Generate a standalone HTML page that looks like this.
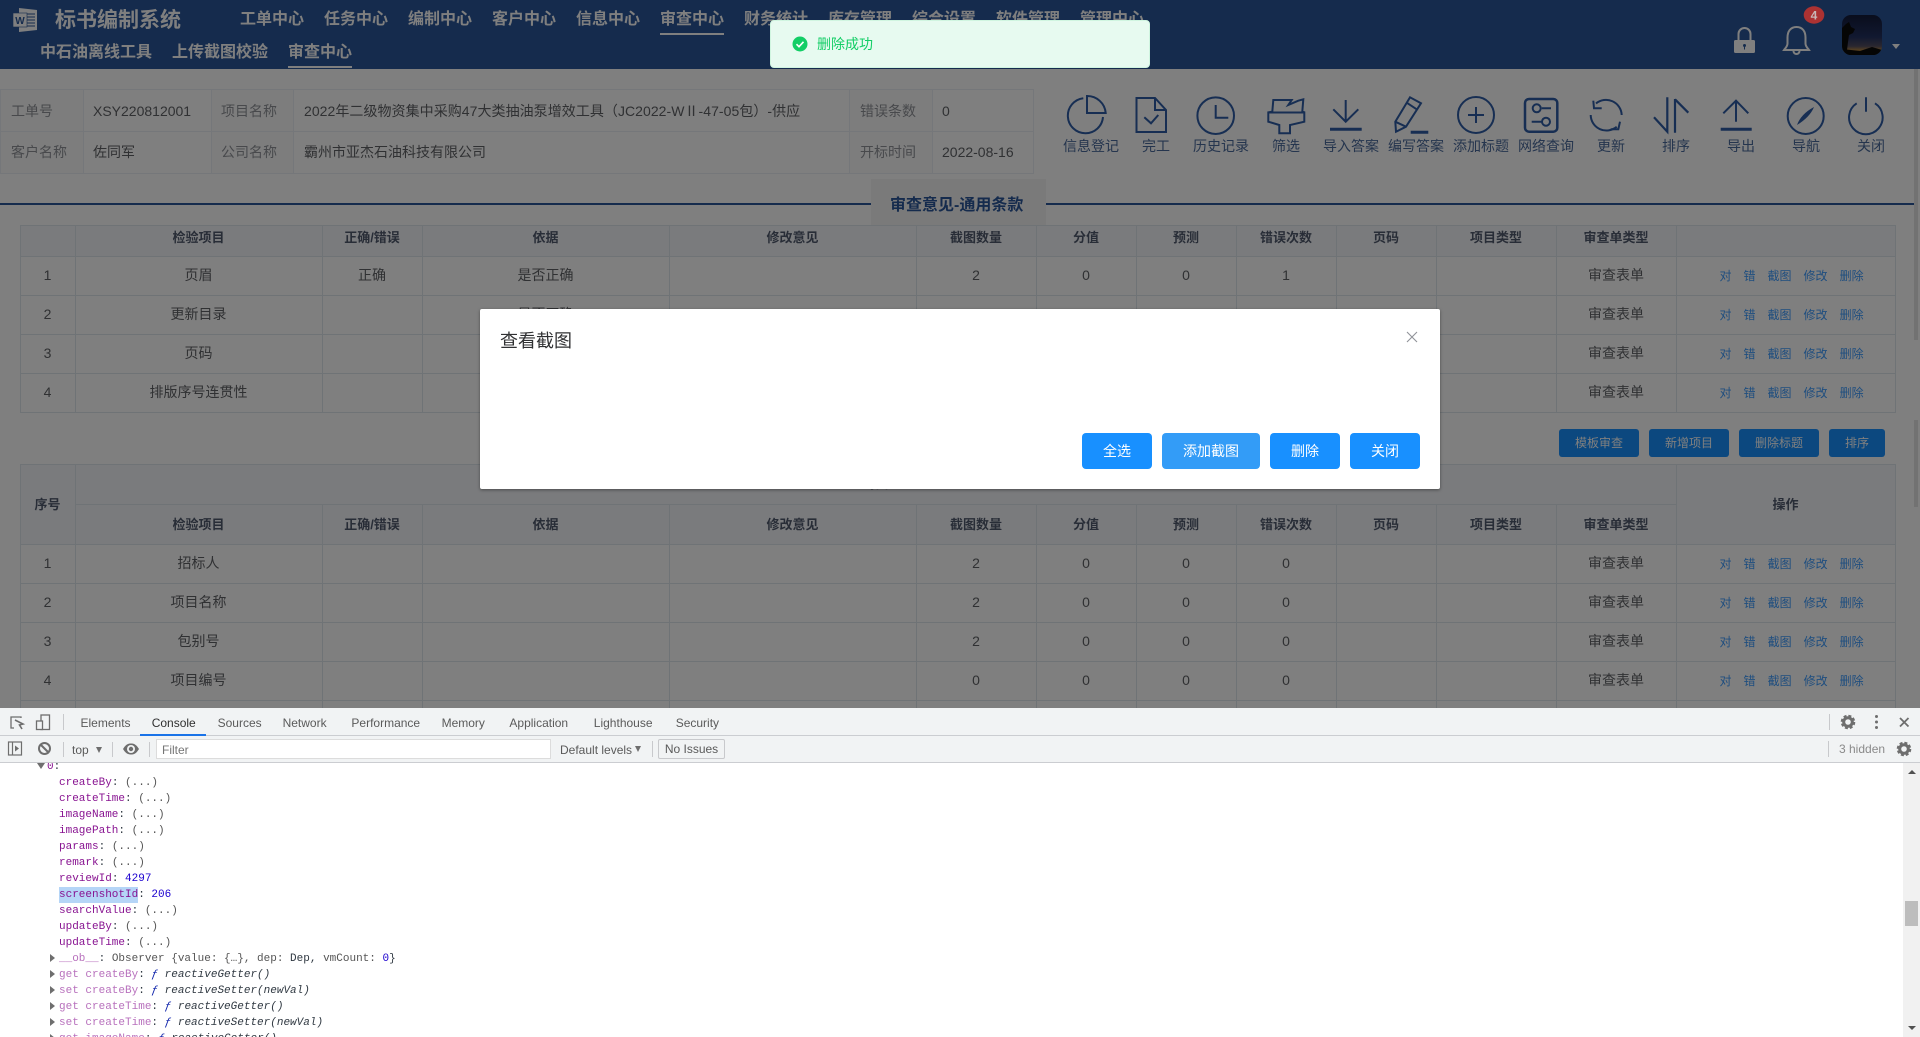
<!DOCTYPE html>
<html lang="zh">
<head>
<meta charset="utf-8">
<title>标书编制系统</title>
<style>
*{box-sizing:border-box}
html,body{margin:0;padding:0;width:1920px;height:1037px;overflow:hidden;background:#fff;font-family:"Liberation Sans","Noto Sans CJK SC",sans-serif}
.a{position:absolute;white-space:nowrap}
#main{position:absolute;left:0;top:0;width:1920px;height:708px;overflow:hidden;background:#fff}
#hd{position:absolute;left:0;top:0;width:1920px;height:69px;background:#2b579a;color:#fff}
#hd .n{position:absolute;top:8px;font-size:16px;line-height:24px;font-weight:700;white-space:nowrap}
#hd .s{position:absolute;top:41px;font-size:16px;line-height:24px;font-weight:700;white-space:nowrap}
#hd .u{position:absolute;height:2px;background:#fff}
table.i{position:absolute;left:0;top:89px;width:1033px;border-collapse:collapse;table-layout:fixed;font-size:14px;color:#606266}
table.i td{height:42px;border:1px solid #ebeef5;padding:0 9px;white-space:nowrap;overflow:hidden}
table.i tr+tr td{padding-bottom:1px}
table.i td.l{color:#909399;background:#fafafa;padding-left:10px}
.t{position:absolute;left:19.5px;width:1875px;border-collapse:collapse;table-layout:fixed;font-size:14px;color:#606266}
.t td,.t th{border:1px solid #dfe6ec;text-align:center;padding:0 0 2px 0;font-weight:400;white-space:nowrap;overflow:hidden}
.t th{background:#f5f7fa;color:#515a6e;font-size:13px;font-weight:700}
.t tr.r td{height:39px}
.t td.o{text-align:left;padding-left:43px;font-size:12px;color:#3f9cff}
.t td.o span{margin-right:12px}
.lb{position:absolute;top:136px;width:65px;text-align:center;font-size:14px;line-height:20px;color:#4a6a9c;white-space:nowrap}
.b2{position:absolute;top:429px;height:28px;background:#1890ff;border-radius:3px;color:#fff;font-size:12px;line-height:28px;text-align:center}
#ov{position:absolute;left:0;top:0;width:1920px;height:708px;background:rgba(0,0,0,.5)}
#dlg{position:absolute;left:480px;top:309px;width:960px;height:180px;background:#fff;border-radius:2px;box-shadow:0 1px 3px rgba(0,0,0,.4)}
.bt{position:absolute;top:124px;height:36px;border-radius:4px;background:#1890ff;color:#fff;font-size:14px;line-height:36px;text-align:center}
#toast{position:absolute;left:770px;top:20px;width:380px;height:48px;background:#e7faf0;border:1px solid #d0f5e0;border-radius:4px}
#dt{position:absolute;left:0;top:708px;width:1920px;height:329px;background:#fff;color:#5a5a5a;font-size:12px}
#dt .tb1{position:absolute;left:0;top:0;width:1920px;height:28px;background:#f1f3f4;border-bottom:1px solid #cbcdd1}
#dt .tb2{position:absolute;left:0;top:28px;width:1920px;height:27px;background:#f1f3f4;border-bottom:1px solid #cbcdd1}
#dt .tab{position:absolute;top:7px;line-height:16px;white-space:nowrap}
#dt .sep{position:absolute;width:1px;background:#c8c9cc}
#con{position:absolute;left:0;top:55px;width:1903px;height:274px;overflow:hidden;font-family:"Liberation Mono",monospace;font-size:11px;line-height:16px;color:#303942}
#con .l{position:absolute;left:59px;white-space:pre;transform:translateY(1px)}
#con .tr{position:absolute;width:0;height:0}
.k{color:#881391}.d{color:#b871bd}.v{color:#555}.m{color:#1c00cf}.f{font-style:italic}.fb{color:#0d22aa;font-style:italic}
</style>
</head>
<body>
<div id="main">
  <div id="hd">
    <svg class="a" style="left:12px;top:7px" width="26" height="26" viewBox="0 0 26 26">
      <path d="M7 1 L25 3 V23 L7 25 Z" fill="#fff"/>
      <path d="M12 7h11M12 10h11M12 13h11M12 16h11M12 19h11" stroke="#2b579a" stroke-width="1.1"/>
      <rect x="1" y="6" width="14" height="14" fill="#fff" stroke="#2b579a" stroke-width=".6"/>
      <text x="8" y="17" font-family="Liberation Sans" font-size="10" font-weight="700" text-anchor="middle" fill="#2b579a">W</text>
    </svg>
    <div class="a" style="left:55px;top:5px;font-size:21px;line-height:32px;font-weight:700">标书编制系统</div>
    <div class="n" style="left:240px">工单中心</div>
    <div class="n" style="left:324px">任务中心</div>
    <div class="n" style="left:408px">编制中心</div>
    <div class="n" style="left:492px">客户中心</div>
    <div class="n" style="left:576px">信息中心</div>
    <div class="n" style="left:660px">审查中心</div>
    <div class="u" style="left:660px;top:33px;width:64px"></div>
    <div class="n" style="left:744px">财务统计</div>
    <div class="n" style="left:828px">库存管理</div>
    <div class="n" style="left:912px">综合设置</div>
    <div class="n" style="left:996px">软件管理</div>
    <div class="n" style="left:1080px">管理中心</div>
    <div class="s" style="left:40px">中石油离线工具</div>
    <div class="s" style="left:172px">上传截图校验</div>
    <div class="s" style="left:288px">审查中心</div>
    <div class="u" style="left:288px;top:66px;width:64px"></div>
    <svg class="a" style="left:1730px;top:22px" width="85" height="36" viewBox="1730 22 85 36">
      <path d="M1738.500 41V34a6 6 0 0 1 12 0v7" fill="none" stroke="#fff" stroke-width="2"/>
      <rect x="1734" y="40" width="21" height="13" rx="1.500" fill="#fff"/>
      <circle cx="1744.500" cy="45.500" r="1.500" fill="#2b579a"/><rect x="1744" y="46" width="1" height="3.500" fill="#2b579a"/>
      <path d="M1796.500 27c-6.500 0-9 5-9 10.500v6c0 3-2.500 5-3.500 6.500h25c-1-1.500-3.500-3.500-3.500-6.500v-6c0-5.500-2.500-10.500-9-10.500z" fill="none" stroke="#fff" stroke-width="2"/>
      <path d="M1793.500 51a3 3 0 0 0 6 0" fill="none" stroke="#fff" stroke-width="2"/>
    </svg>
    <div class="a" style="left:1892px;top:44px;width:0;height:0;border-left:4px solid transparent;border-right:4px solid transparent;border-top:5px solid #fff"></div>
  </div>

  <table class="i">
    <colgroup><col style="width:83px"><col style="width:128px"><col style="width:82px"><col style="width:556px"><col style="width:83px"><col style="width:101px"></colgroup>
    <tr><td class="l">工单号</td><td>XSY220812001</td><td class="l" style="padding-left:9px">项目名称</td><td style="padding-left:10px;letter-spacing:.05px">2022年二级物资集中采购47大类抽油泵增效工具（JC2022-WⅡ-47-05包）-供应</td><td class="l">错误条数</td><td>0</td></tr>
    <tr><td class="l">客户名称</td><td>佐同军</td><td class="l" style="padding-left:9px">公司名称</td><td style="padding-left:10px">霸州市亚杰石油科技有限公司</td><td class="l">开标时间</td><td>2022-08-16</td></tr>
  </table>

  <svg class="a" style="left:1060px;top:90px" width="830" height="48" viewBox="1060 90 830 48" fill="none" stroke="#2e5da6" stroke-width="2">
    <path d="M1083.300 98.200A17.600 17.600 0 1 0 1103 117"/>
    <path d="M1087 96V113H1105.700A18.500 18.500 0 0 0 1087 96Z"/>
    <path d="M1136.500 98H1155L1166 110V132H1136.500Z"/><path d="M1155 98V110H1166"/>
    <path d="M1144.300 117.300L1151 123.300L1158.300 115"/>
    <circle cx="1215.700" cy="115.700" r="18.300"/><path d="M1215.700 105V117.700H1228.300"/>
    <path d="M1273.300 100H1291.700L1288.300 105L1298.300 100.700L1303.300 99.300L1302.300 111.700L1304.300 112.300V121.700L1290 125V133.300H1279.300V125L1268.300 121.700V112.300L1272.300 111.700Z"/>
    <path d="M1269 112.500H1304"/>
    <path d="M1330 129.300H1361.700" stroke-width="3"/><path d="M1345.700 100V121.700M1333.300 109.300L1345.700 121.700L1358.300 109.300"/>
    <path d="M1396 131.700L1395.300 121.700L1410 97.300L1421 103.300L1406 126.700Z"/><path d="M1406.700 102.700L1416.700 109.300M1395.300 121.700L1406 126.700"/>
    <path d="M1410.700 132.300H1428.300" stroke-width="3"/>
    <circle cx="1476" cy="115" r="18"/><path d="M1476 107V123M1468 115H1484"/>
    <rect x="1525" y="99" width="32.300" height="32.700" rx="4" stroke-width="2.500"/>
    <circle cx="1536.700" cy="108.300" r="4"/><path d="M1541.700 108.300H1551M1531.700 121.700H1541.700"/><circle cx="1546" cy="121.700" r="4"/>
    <path d="M1621.700 115A15.700 15.700 0 0 0 1596 103.500"/><path d="M1593.300 100.700L1594 108.300L1601.700 108.300"/>
    <path d="M1590.700 115A15.700 15.700 0 0 0 1616.700 126.700"/><path d="M1620 121.700L1618.300 129.300L1610.700 129.300"/>
    <path d="M1667.300 97.300V131.700L1654 117.300M1675 99V132.700M1675 99.300L1688.300 112.700" stroke-width="2.200"/>
    <path d="M1720.700 129.300H1751.700" stroke-width="3"/><path d="M1736 100.700V121.700M1723.300 113.300L1736 100.700L1748.300 113.300"/>
    <circle cx="1805.700" cy="116" r="18"/><path d="M1814 107Q1810 117 1797 125Q1801 114 1814 107Z" fill="#2e5da6" stroke="none"/>
    <path d="M1856.700 103.300A16.800 16.800 0 1 0 1875 103.300M1866 97.300V111.700"/>
  </svg>
  <div class="lb" style="left:1058.500px">信息登记</div>
  <div class="lb" style="left:1123.500px">完工</div>
  <div class="lb" style="left:1188.500px">历史记录</div>
  <div class="lb" style="left:1253.500px">筛选</div>
  <div class="lb" style="left:1318.500px">导入答案</div>
  <div class="lb" style="left:1383.500px">编写答案</div>
  <div class="lb" style="left:1448.500px">添加标题</div>
  <div class="lb" style="left:1513.500px">网络查询</div>
  <div class="lb" style="left:1578.500px">更新</div>
  <div class="lb" style="left:1643.500px">排序</div>
  <div class="lb" style="left:1708.500px">导出</div>
  <div class="lb" style="left:1773.500px">导航</div>
  <div class="lb" style="left:1838.500px">关闭</div>

  <div class="a" style="left:0;top:203px;width:1914px;height:2px;background:#2b579a"></div>
  <div class="a" style="left:871px;top:179px;width:175px;height:46px;background:#f5f5f5"></div>
  <div class="a" style="left:890px;top:194px;font-size:16px;line-height:24px;font-weight:700;color:#2b579a">审查意见-通用条款</div>

  <table class="t" style="top:225px">
    <colgroup><col style="width:55px"><col style="width:247px"><col style="width:100px"><col style="width:247px"><col style="width:247px"><col style="width:120px"><col style="width:100px"><col style="width:100px"><col style="width:100px"><col style="width:100px"><col style="width:120px"><col style="width:120px"><col style="width:219px"></colgroup>
    <tr style="height:31px"><th style="padding-bottom:10px"></th><th style="padding-bottom:10px">检验项目</th><th style="padding-bottom:10px">正确/错误</th><th style="padding-bottom:10px">依据</th><th style="padding-bottom:10px">修改意见</th><th style="padding-bottom:10px">截图数量</th><th style="padding-bottom:10px">分值</th><th style="padding-bottom:10px">预测</th><th style="padding-bottom:10px">错误次数</th><th style="padding-bottom:10px">页码</th><th style="padding-bottom:10px">项目类型</th><th style="padding-bottom:10px">审查单类型</th><th style="padding-bottom:10px"></th></tr>
    <tr class="r"><td>1</td><td>页眉</td><td>正确</td><td>是否正确</td><td></td><td>2</td><td>0</td><td>0</td><td>1</td><td></td><td></td><td>审查表单</td><td class="o"><span>对</span><span>错</span><span>截图</span><span>修改</span><span>删除</span></td></tr>
    <tr class="r"><td>2</td><td>更新目录</td><td></td><td>是否正确</td><td></td><td>2</td><td>0</td><td>0</td><td>0</td><td></td><td></td><td>审查表单</td><td class="o"><span>对</span><span>错</span><span>截图</span><span>修改</span><span>删除</span></td></tr>
    <tr class="r"><td>3</td><td>页码</td><td></td><td>是否正确</td><td></td><td>2</td><td>0</td><td>0</td><td>0</td><td></td><td></td><td>审查表单</td><td class="o"><span>对</span><span>错</span><span>截图</span><span>修改</span><span>删除</span></td></tr>
    <tr class="r"><td>4</td><td>排版序号连贯性</td><td></td><td>是否正确</td><td></td><td>2</td><td>0</td><td>0</td><td>0</td><td></td><td></td><td>审查表单</td><td class="o"><span>对</span><span>错</span><span>截图</span><span>修改</span><span>删除</span></td></tr>
  </table>

  <div class="b2" style="left:1559px;width:80px">模板审查</div>
  <div class="b2" style="left:1649px;width:80px">新增项目</div>
  <div class="b2" style="left:1739px;width:80px">删除标题</div>
  <div class="b2" style="left:1829px;width:56px">排序</div>

  <table class="t" style="top:464px">
    <colgroup><col style="width:55px"><col style="width:247px"><col style="width:100px"><col style="width:247px"><col style="width:247px"><col style="width:120px"><col style="width:100px"><col style="width:100px"><col style="width:100px"><col style="width:100px"><col style="width:120px"><col style="width:120px"><col style="width:219px"></colgroup>
    <tr style="height:40px"><th rowspan="2">序号</th><th colspan="11" style="padding-bottom:5px">封面</th><th rowspan="2">操作</th></tr>
    <tr style="height:40px"><th>检验项目</th><th>正确/错误</th><th>依据</th><th>修改意见</th><th>截图数量</th><th>分值</th><th>预测</th><th>错误次数</th><th>页码</th><th>项目类型</th><th>审查单类型</th></tr>
    <tr class="r"><td>1</td><td>招标人</td><td></td><td></td><td></td><td>2</td><td>0</td><td>0</td><td>0</td><td></td><td></td><td>审查表单</td><td class="o"><span>对</span><span>错</span><span>截图</span><span>修改</span><span>删除</span></td></tr>
    <tr class="r"><td>2</td><td>项目名称</td><td></td><td></td><td></td><td>2</td><td>0</td><td>0</td><td>0</td><td></td><td></td><td>审查表单</td><td class="o"><span>对</span><span>错</span><span>截图</span><span>修改</span><span>删除</span></td></tr>
    <tr class="r"><td>3</td><td>包别号</td><td></td><td></td><td></td><td>2</td><td>0</td><td>0</td><td>0</td><td></td><td></td><td>审查表单</td><td class="o"><span>对</span><span>错</span><span>截图</span><span>修改</span><span>删除</span></td></tr>
    <tr class="r"><td>4</td><td>项目编号</td><td></td><td></td><td></td><td>0</td><td>0</td><td>0</td><td>0</td><td></td><td></td><td>审查表单</td><td class="o"><span>对</span><span>错</span><span>截图</span><span>修改</span><span>删除</span></td></tr>
    <tr class="r"><td></td><td></td><td></td><td></td><td></td><td></td><td></td><td></td><td></td><td></td><td></td><td></td><td></td></tr>
  </table>

  <div class="a" style="left:1914px;top:69px;width:4px;height:271px;background:#e4e4e4"></div>
  <div class="a" style="left:1914px;top:420px;width:4px;height:87px;background:#e4e4e4"></div>
</div>

<div id="ov"></div>

<svg class="a" style="left:1800px;top:0" width="90" height="60" viewBox="1800 0 90 60">
  <defs>
    <linearGradient id="sky" x1="0" y1="0" x2="0" y2="1">
      <stop offset="0" stop-color="#090d1c"/><stop offset=".55" stop-color="#111830"/><stop offset=".78" stop-color="#2a2730"/><stop offset=".88" stop-color="#574020"/><stop offset="1" stop-color="#070707"/>
    </linearGradient>
    <clipPath id="av"><rect x="1842" y="15" width="40" height="40" rx="9"/></clipPath>
  </defs>
  <rect x="1842" y="15" width="40" height="40" rx="9" fill="url(#sky)"/>
  <g clip-path="url(#av)">
    <path d="M1842 55V49L1860 51L1872 47L1882 50V55Z" fill="#050505"/>
    <path d="M1842 28L1846 24L1849 22L1851 27L1855 29L1853 33L1849 35L1848 42L1847 50H1842Z" fill="#050505"/>
  </g>
  <ellipse cx="1814" cy="15" rx="10.300" ry="8.700" fill="#ac3232"/>
  <text x="1814" y="19.500" font-family="Liberation Sans" font-size="12" font-weight="700" text-anchor="middle" fill="#c8b8b8">4</text>
</svg>

<div id="dlg">
  <div class="a" style="left:20px;top:19px;font-size:18px;line-height:26px;color:#303133">查看截图</div>
  <svg class="a" style="left:926px;top:22px" width="12" height="12" viewBox="0 0 12 12"><path d="M1 1L11 11M11 1L1 11" stroke="#909399" stroke-width="1.100" fill="none"/></svg>
  <div class="bt" style="left:602px;width:70px">全选</div>
  <div class="bt" style="left:682px;width:98px;background:#339cf7">添加截图</div>
  <div class="bt" style="left:790px;width:70px">删除</div>
  <div class="bt" style="left:870px;width:70px">关闭</div>
</div>

<div id="toast">
  <svg class="a" style="left:21px;top:15px" width="16" height="16" viewBox="0 0 16 16"><circle cx="8" cy="8" r="7.500" fill="#13ce66"/><path d="M4.500 8.200L7 10.700L11.500 5.800" stroke="#fff" stroke-width="1.600" fill="none"/></svg>
  <div class="a" style="left:46px;top:13px;font-size:14px;line-height:20px;color:#13ce66">删除成功</div>
</div>

<div id="dt">
  <div class="tb1">
    <svg class="a" style="left:8px;top:6px" width="46" height="18" viewBox="0 0 46 18" fill="none" stroke="#6e6e6e" stroke-width="1.300">
      <path d="M13 4V3H3V14H6"/><path d="M7 6L15 10L11.500 11L14 15" stroke-width="1.600"/>
      <rect x="33" y="1" width="8.500" height="14.500"/><rect x="28.500" y="7" width="6" height="8.500" fill="#f1f3f4"/>
    </svg>
    <div class="sep" style="left:63px;top:6px;height:16px"></div>
    <div class="tab" style="left:80.500px">Elements</div>
    <div class="tab" style="left:151.700px;color:#303030">Console</div>
    <div class="tab" style="left:217.600px">Sources</div>
    <div class="tab" style="left:282.600px">Network</div>
    <div class="tab" style="left:351.400px">Performance</div>
    <div class="tab" style="left:441.600px">Memory</div>
    <div class="tab" style="left:509.400px">Application</div>
    <div class="tab" style="left:593.800px">Lighthouse</div>
    <div class="tab" style="left:675.700px">Security</div>
    <div class="a" style="left:140px;top:25.500px;width:66px;height:2px;background:#1a73e8"></div>
    <div class="sep" style="left:1829px;top:6px;height:16px"></div>
    <svg class="a" style="left:1838px;top:4px" width="76" height="20" viewBox="1838 712 76 20" fill="none">
      <circle cx="1848" cy="722" r="4.300" stroke="#6e6e6e" stroke-width="3"/>
      <circle cx="1848" cy="722" r="6.200" stroke="#6e6e6e" stroke-width="2.200" stroke-dasharray="3 1.900"/>
      <circle cx="1876.500" cy="716.500" r="1.500" fill="#6e6e6e"/><circle cx="1876.500" cy="722" r="1.500" fill="#6e6e6e"/><circle cx="1876.500" cy="727.500" r="1.500" fill="#6e6e6e"/>
      <path d="M1900 718L1908.500 726.500M1908.500 718L1900 726.500" stroke="#6e6e6e" stroke-width="1.800"/>
    </svg>
  </div>
  <div class="tb2">
    <svg class="a" style="left:6px;top:3px" width="50" height="20" viewBox="0 0 50 20" fill="none" stroke="#6e6e6e" stroke-width="1.200">
      <rect x="2.500" y="3" width="13" height="13"/><path d="M6.500 3V16"/><path d="M9 6.500L13 9.500L9 12.500Z" fill="#6e6e6e" stroke="none"/>
      <circle cx="38.500" cy="9.500" r="5.500" stroke-width="2"/><path d="M34.500 5.500L42.500 13.500" stroke-width="2"/>
    </svg>
    <div class="sep" style="left:63px;top:6px;height:15px"></div>
    <div class="a" style="left:72px;top:6px;line-height:16px">top</div>
    <div class="a" style="left:96px;top:11px;width:0;height:0;border-left:3.500px solid transparent;border-right:3.500px solid transparent;border-top:6px solid #6e6e6e"></div>
    <div class="sep" style="left:112px;top:6px;height:15px"></div>
    <svg class="a" style="left:123px;top:5px" width="16" height="16" viewBox="0 0 16 16"><path d="M0 8C3 3 5.500 2.500 8 2.500S13 3 16 8C13 13 10.500 13.500 8 13.500S3 13 0 8Z" fill="#6e6e6e"/><circle cx="8" cy="8" r="4" fill="#f1f3f4"/><circle cx="8" cy="8" r="2.200" fill="#6e6e6e"/></svg>
    <div class="sep" style="left:149px;top:6px;height:15px"></div>
    <div class="a" style="left:156px;top:3px;width:395px;height:20px;background:#fff;border:1px solid #dcdcdc;padding-left:5px;line-height:20px;color:#757575">Filter</div>
    <div class="a" style="left:560px;top:6px;line-height:16px">Default levels</div>
    <div class="a" style="left:635px;top:10px;width:0;height:0;border-left:3.500px solid transparent;border-right:3.500px solid transparent;border-top:6px solid #6e6e6e"></div>
    <div class="sep" style="left:652px;top:5px;height:16px"></div>
    <div class="a" style="left:658px;top:3px;width:67px;height:20px;border:1px solid #c8c9cc;border-radius:2px;text-align:center;line-height:19px">No Issues</div>
    <div class="sep" style="left:1828px;top:5px;height:16px"></div>
    <div class="a" style="left:1839px;top:5px;line-height:16px;color:#8a8a8a">3 hidden</div>
    <svg class="a" style="left:1896px;top:5px" width="16" height="16" viewBox="0 0 16 16" fill="none">
      <circle cx="8" cy="8" r="4.300" stroke="#6e6e6e" stroke-width="3"/>
      <circle cx="8" cy="8" r="6.200" stroke="#6e6e6e" stroke-width="2.200" stroke-dasharray="3 1.900"/>
    </svg>
  </div>
  <div id="con">
    <div class="a" style="left:59px;top:124px;width:79px;height:16px;background:#b5d5f7"></div>
    <div class="tr" style="left:37px;top:0;border-left:4px solid transparent;border-right:4px solid transparent;border-top:6px solid #6e6e6e"></div>
    <div class="l" style="left:47px;top:-5px"><span class="k">0</span>:</div>
    <div class="l" style="top:11px"><span class="k">createBy</span>: <span class="v">(...)</span></div>
    <div class="l" style="top:27px"><span class="k">createTime</span>: <span class="v">(...)</span></div>
    <div class="l" style="top:43px"><span class="k">imageName</span>: <span class="v">(...)</span></div>
    <div class="l" style="top:59px"><span class="k">imagePath</span>: <span class="v">(...)</span></div>
    <div class="l" style="top:75px"><span class="k">params</span>: <span class="v">(...)</span></div>
    <div class="l" style="top:91px"><span class="k">remark</span>: <span class="v">(...)</span></div>
    <div class="l" style="top:107px"><span class="k">reviewId</span>: <span class="m">4297</span></div>
    <div class="l" style="top:123px"><span class="k">screenshotId</span>: <span class="m">206</span></div>
    <div class="l" style="top:139px"><span class="k">searchValue</span>: <span class="v">(...)</span></div>
    <div class="l" style="top:155px"><span class="k">updateBy</span>: <span class="v">(...)</span></div>
    <div class="l" style="top:171px"><span class="k">updateTime</span>: <span class="v">(...)</span></div>
    <div class="tr" style="left:50px;top:191px;border-top:4px solid transparent;border-bottom:4px solid transparent;border-left:5px solid #6e6e6e"></div>
    <div class="l" style="top:187px"><span class="d">__ob__</span>: <span class="v">Observer {value: {…}, dep:</span> Dep, <span class="v">vmCount:</span> <span class="m">0</span>}</div>
    <div class="tr" style="left:50px;top:207px;border-top:4px solid transparent;border-bottom:4px solid transparent;border-left:5px solid #6e6e6e"></div>
    <div class="l" style="top:203px"><span class="d">get createBy</span>: <span class="fb">ƒ</span> <span class="f">reactiveGetter()</span></div>
    <div class="tr" style="left:50px;top:223px;border-top:4px solid transparent;border-bottom:4px solid transparent;border-left:5px solid #6e6e6e"></div>
    <div class="l" style="top:219px"><span class="d">set createBy</span>: <span class="fb">ƒ</span> <span class="f">reactiveSetter(newVal)</span></div>
    <div class="tr" style="left:50px;top:239px;border-top:4px solid transparent;border-bottom:4px solid transparent;border-left:5px solid #6e6e6e"></div>
    <div class="l" style="top:235px"><span class="d">get createTime</span>: <span class="fb">ƒ</span> <span class="f">reactiveGetter()</span></div>
    <div class="tr" style="left:50px;top:255px;border-top:4px solid transparent;border-bottom:4px solid transparent;border-left:5px solid #6e6e6e"></div>
    <div class="l" style="top:251px"><span class="d">set createTime</span>: <span class="fb">ƒ</span> <span class="f">reactiveSetter(newVal)</span></div>
    <div class="tr" style="left:50px;top:271px;border-top:4px solid transparent;border-bottom:4px solid transparent;border-left:5px solid #6e6e6e"></div>
    <div class="l" style="top:267px"><span class="d">get imageName</span>: <span class="fb">ƒ</span> <span class="f">reactiveGetter()</span></div>
  </div>
  <div class="a" style="left:1903px;top:55px;width:17px;height:274px;background:#f1f1f1"></div>
  <div class="a" style="left:1908px;top:62px;width:0;height:0;border-left:4px solid transparent;border-right:4px solid transparent;border-bottom:4px solid #505050"></div>
  <div class="a" style="left:1908px;top:318px;width:0;height:0;border-left:4px solid transparent;border-right:4px solid transparent;border-top:4px solid #505050"></div>
  <div class="a" style="left:1905px;top:193px;width:13px;height:25px;background:#bdbdbd"></div>
</div>
</body>
</html>
